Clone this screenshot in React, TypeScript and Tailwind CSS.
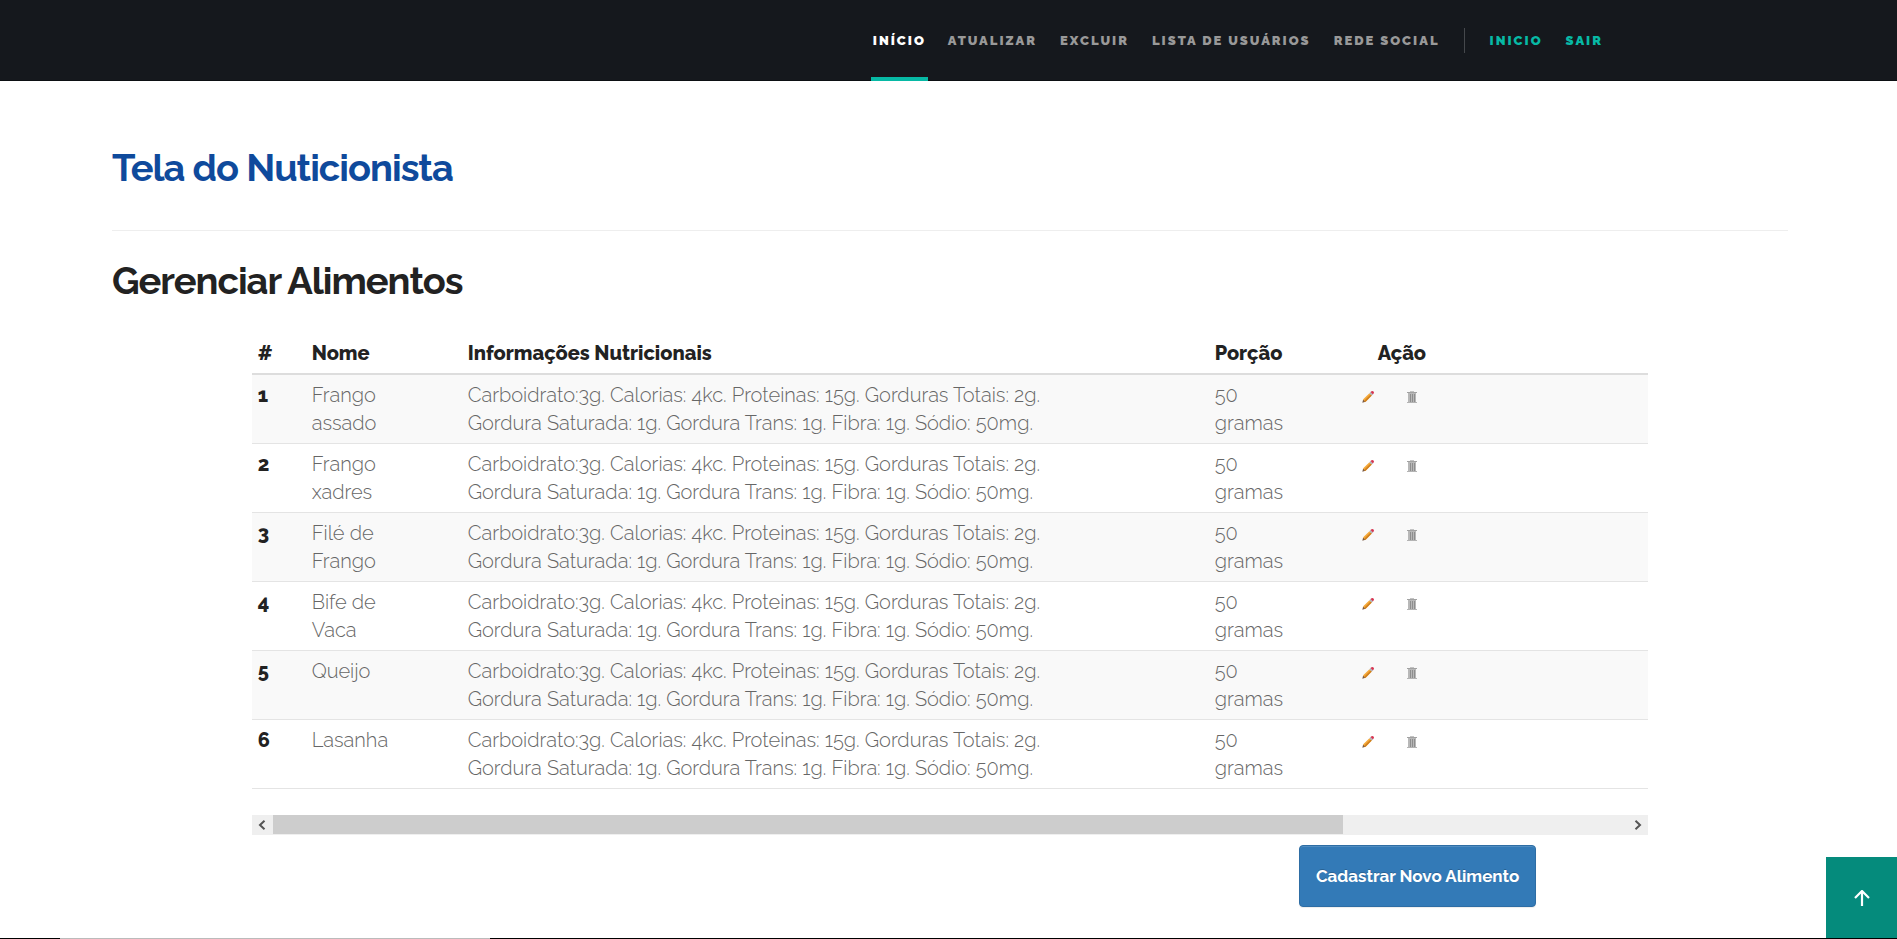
import { useRef, useState } from "react";

const links = ["Atualizar", "Excluir", "Lista de usuários", "Rede social"];
const foods = ["Frango assado", "Frango xadres", "Filé de Frango", "Bife de Vaca", "Queijo", "Lasanha"];

function Pencil() {
  return (
    <svg viewBox="0 0 12 12" className="size-3" aria-hidden="true">
      <path d="M0.3 11.7 L1.2 8.4 L3.6 10.8 Z" fill="#7a5a45" />
      <path d="M1 8.6 L7.4 2.2 L9.8 4.6 L3.4 11 Z" fill="#f5a93a" />
      <path d="M2.2 9.8 L8.6 3.4 L9.8 4.6 L3.4 11 Z" fill="#d0801f" />
      <path d="M7.4 2.2 L8.5 1.1 L10.9 3.5 L9.8 4.6 Z" fill="#a9b4bd" />
      <path d="M8.5 1.1 Q10.2 -0.5 11.5 0.5 Q12.5 1.8 10.9 3.5 Z" fill="#d6344f" />
    </svg>
  );
}

function Trash() {
  return (
    <svg viewBox="0 0 12 12" className="size-3" aria-hidden="true">
      <rect x="4" y="0" width="4" height="1" fill="#c4c4c4" />
      <rect x="1" y="1" width="10" height="1" fill="#a2a2a2" />
      <rect x="2" y="2" width="8" height="9" fill="#b8b8b8" />
      <path d="M4.5 3v8M6.5 3v8M8.5 3v8" stroke="#8e8e8e" strokeWidth="1" />
      <rect x="1" y="11" width="10" height="1" fill="#b4b4b4" />
    </svg>
  );
}

function Nav() {
  return (
    <header className="bg-[#15181d] shadow-[inset_0_-1px_0_#0c0f13]">
      <nav className="flex h-[81px] items-stretch justify-end pr-[15.5%] text-[13px] font-black uppercase tracking-[2px] text-[#999]">
        <a href="#inicio" className="flex items-center border-y-4 border-t-transparent border-b-[#07b9a5] px-0.5 text-white">Início</a>
        <div className="ml-5 flex items-center gap-[23px]">
          {links.map((l) => (
            <a key={l} href="#acao">{l}</a>
          ))}
        </div>
        <div className="my-auto ml-6 flex h-[25px] items-center gap-[23px] border-l border-[#45484c] pl-[25px] text-[#07b9a5]">
          <a href="#home">Inicio</a>
          <a href="#sair">Sair</a>
        </div>
      </nav>
    </header>
  );
}

export default function App() {
  const box = useRef<HTMLDivElement>(null);
  const [offset, setOffset] = useState(0);
  const scroll = (by: number) => box.current?.scrollBy({ left: by });

  return (
    <div className="bg-white font-['Raleway','Lato',sans-serif] text-[#666]">
      <Nav />
      <main className="pt-[57px] pr-[109px] pb-[31px] pl-28">
        <h1 className="py-2 text-[38px] leading-[44px] font-bold tracking-[-1px] text-[#0f4a9c]">Tela do Nuticionista</h1>
        <hr className="mt-8 mb-7 border-[#eee]" />
        <h2 className="text-[38px] leading-[44px] font-bold tracking-[-1px] text-[#222]">Gerenciar Alimentos</h2>
        <section className="mx-auto mt-[30px] w-10/12">
          <div
            ref={box}
            onScroll={(e) => setOffset((e.currentTarget.scrollLeft / e.currentTarget.scrollWidth) * 100)}
            className="overflow-x-auto [scrollbar-width:none]"
          >
            <table className="w-[126%] table-fixed border-b border-[#e4e4e4] text-left text-[20px] leading-7 font-light">
              <colgroup>
                <col className="w-[54px]" />
                <col className="w-[156px]" />
                <col className="w-[747px]" />
                <col className="w-[141px]" />
                <col />
              </colgroup>
              <thead className="border-b-2 border-[#ddd] text-[#222]">
                <tr>
                  <th className="p-1.5 font-extrabold">#</th>
                  <th className="p-1.5 font-extrabold">Nome</th>
                  <th className="p-1.5 font-extrabold">Informações Nutricionais</th>
                  <th className="p-1.5 font-extrabold">Porção</th>
                  <th className="py-1.5 pl-7 font-extrabold">Ação</th>
                </tr>
              </thead>
              <tbody>
                {foods.map((food, i) => (
                  <tr key={food} className="border-t border-[#e4e4e4] align-top first:border-t-0 odd:bg-[#f9f9f9]">
                    <th scope="row" className="p-1.5 font-extrabold text-[#222]">{i + 1}</th>
                    <td className="py-1.5 pr-16 pl-1.5">{food}</td>
                    <td className="p-1.5">
                      Carboidrato:3g. Calorias: 4kc. Proteinas: 15g. Gorduras Totais: 2g.
                      <br />
                      Gordura Saturada: 1g. Gordura Trans: 1g. Fibra: 1g. Sódio: 50mg.
                    </td>
                    <td className="py-1.5 pr-16 pl-1.5">50 gramas</td>
                    <td className="px-3 py-1.5">
                      <div className="flex h-8 items-center gap-8">
                        <button type="button" aria-label={`Editar ${food}`}><Pencil /></button>
                        <button type="button" aria-label={`Excluir ${food}`}><Trash /></button>
                      </div>
                    </td>
                  </tr>
                ))}
              </tbody>
            </table>
          </div>
          <div className="mt-[26px] flex h-5 bg-[#efefef] text-[#555]">
            <button type="button" aria-label="Rolar para a esquerda" onClick={() => scroll(-120)} className="flex w-[21px] items-center justify-center">
              <svg viewBox="0 0 8 10" className="h-2.5 w-2" aria-hidden="true"><path d="M6.5 0.8L2 5l4.5 4.2" fill="none" stroke="currentColor" strokeWidth="2" /></svg>
            </button>
            <div className="flex-1 overflow-hidden">
              <div className="h-[19px] w-[79%] bg-[#cdcdcd]" style={{ marginLeft: `${offset}%` }} />
            </div>
            <button type="button" aria-label="Rolar para a direita" onClick={() => scroll(120)} className="flex w-[21px] items-center justify-center">
              <svg viewBox="0 0 8 10" className="h-2.5 w-2" aria-hidden="true"><path d="M1.5 0.8L6 5l-4.5 4.2" fill="none" stroke="currentColor" strokeWidth="2" /></svg>
            </button>
          </div>
          <div className="mt-2.5 flex justify-end pr-28">
            <button type="button" className="rounded border border-[#2e6da4] bg-[#337ab7] px-4 py-4 text-[17px] leading-7 font-bold text-white shadow-[inset_0_1px_0_rgba(255,255,255,0.15),0_1px_1px_rgba(0,0,0,0.075)] [text-shadow:0_-1px_0_rgba(0,0,0,0.2)]">
              Cadastrar Novo Alimento
            </button>
          </div>
        </section>
      </main>
      <footer className="flex h-px bg-black">
        <div className="ml-[60px] w-[430px] bg-[#bbb]" />
      </footer>
      <a href="#topo" aria-label="Voltar ao topo" className="fixed right-0 bottom-px flex h-[81px] w-[71px] items-center justify-center bg-[#058b7c] text-white">
        <svg viewBox="0 0 16 16" className="size-4" aria-hidden="true"><path d="M8 16V1.5M1 8l7-7 7 7" fill="none" stroke="currentColor" strokeWidth="2.2" /></svg>
      </a>
    </div>
  );
}
